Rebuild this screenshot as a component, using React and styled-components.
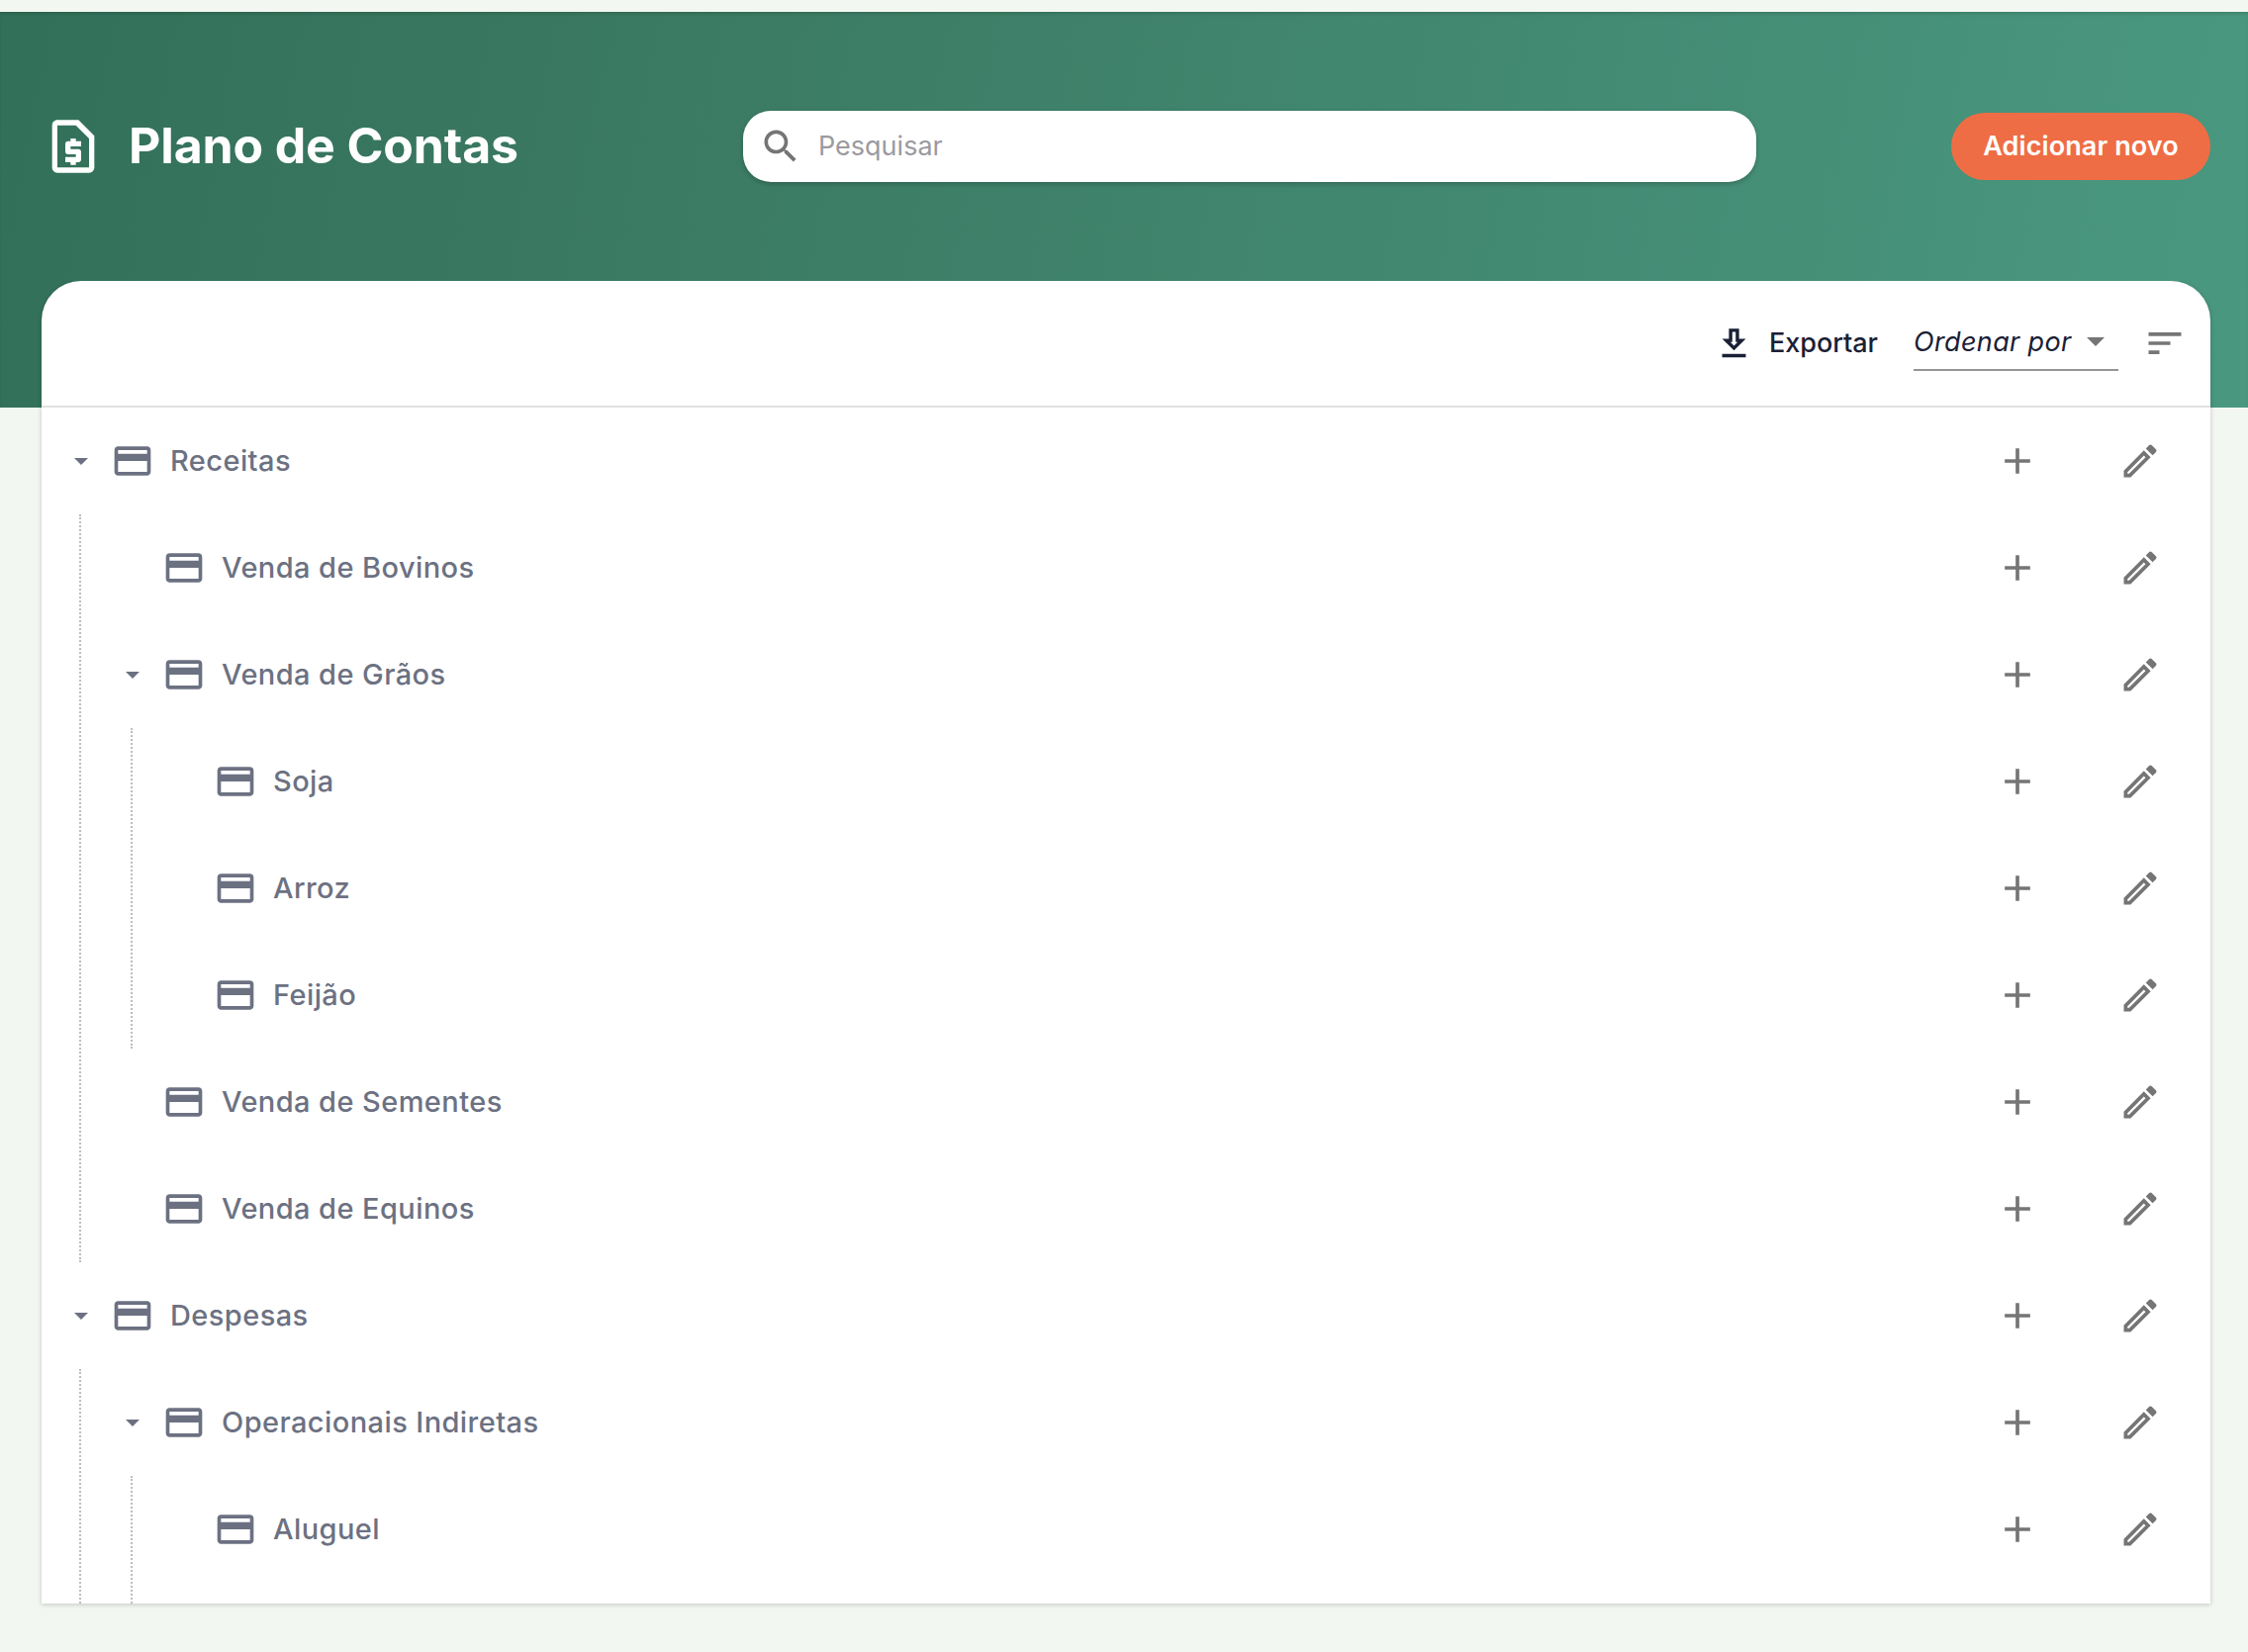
import React from "react";
import styled, { createGlobalStyle } from "styled-components";

const Global = createGlobalStyle`
  html, body { margin: 0; padding: 0; background: #f3f7f2; }
  body { font-family: "Inter", "Open Sans", sans-serif; }
  * { box-sizing: border-box; }
`;

const Page = styled.div`
  position: relative;
  width: 2272px;
  height: 1670px;
  overflow: hidden;
  padding-top: 12px;
`;

const Hero = styled.header`
  height: 400px;
  background: linear-gradient(100deg, #32705a 0%, #3a7861 25%, #4a9880 100%);
  box-shadow: inset 0 3px 4px -2px rgba(0, 0, 0, 0.2);
  display: flex;
  align-items: flex-start;
  padding: 100px 38px 0 52px;
`;

const TitleGroup = styled.div`
  display: flex;
  align-items: center;
  width: 699px;
  height: 72px;
  flex: none;
`;

const TitleIcon = styled.svg`
  width: 64px;
  height: 64px;
  margin-left: -10px;
  fill: #fff;
  flex: none;
`;

const Title = styled.h1`
  margin: -2px 0 0 24px;
  font-size: 50px;
  line-height: 72px;
  font-weight: 700;
  letter-spacing: -0.15px;
  color: #fff;
  white-space: nowrap;
`;

const Search = styled.div`
  width: 1024px;
  height: 72px;
  flex: none;
  background: #fff;
  border-radius: 28px;
  box-shadow: 0 2px 5px rgba(0, 0, 0, 0.22);
  display: flex;
  align-items: center;
  padding-left: 16px;
`;

const SearchIcon = styled.svg`
  width: 44px;
  height: 44px;
  fill: #757575;
  flex: none;
`;

const SearchText = styled.span`
  margin: -2px 0 0 16px;
  font-size: 27px;
  color: #9a9a9f;
`;

const AddButton = styled.button`
  margin: 2px 0 0 auto;
  width: 262px;
  height: 68px;
  border: 0;
  border-radius: 34px;
  background: #ef6d45;
  color: #fff;
  font-family: inherit;
  font-size: 27px;
  font-weight: 600;
  letter-spacing: 0.1px;
  white-space: nowrap;
  padding: 0 0 2px;
`;

const Card = styled.main`
  position: absolute;
  left: 42px;
  top: 284px;
  width: 2192px;
  height: 1337px;
  background: #fff;
  border-radius: 40px 40px 0 0;
  box-shadow: 0 1px 5px rgba(0, 0, 0, 0.2);
  clip-path: inset(0 -10px -10px -10px);
  overflow: hidden;
`;

const Toolbar = styled.div`
  height: 128px;
  border-bottom: 2px solid #e2e2e2;
  display: flex;
  align-items: flex-start;
  justify-content: flex-end;
  padding: 30px 24px 0 0;
`;

const ExportIcon = styled.svg`
  width: 41px;
  height: 41px;
  fill: #1a2035;
  flex: none;
  margin-top: 13px;
`;

const ExportLabel = styled.span`
  margin: 0 36px 0 15px;
  font-size: 27px;
  line-height: 66px;
  font-weight: 500;
  letter-spacing: -0.05px;
  color: #1a2035;
`;

const SortSelect = styled.div`
  width: 207px;
  height: 61px;
  padding-top: 4px;
  border-bottom: 2px solid #949494;
  display: flex;
  align-items: center;
  font-size: 27px;
  font-style: italic;
  letter-spacing: 0.35px;
  color: #1a2035;
  white-space: nowrap;
`;

const SortCaret = styled.span`
  margin-left: 15px;
  width: 0;
  height: 0;
  border-left: 9px solid transparent;
  border-right: 9px solid transparent;
  border-top: 9px solid #757575;
`;

const SortIcon = styled.svg`
  width: 44px;
  height: 44px;
  margin: 11px 0 0 25px;
  fill: #757575;
  flex: none;
`;

const Tree = styled.ul`
  list-style: none;
  margin: 0;
  padding: 0;
`;

const Item = styled.li`
  position: relative;
`;

const Row = styled.div`
  height: 108px;
  display: flex;
  align-items: center;
  padding-left: ${(p) => 28 + p.$level * 52}px;
  padding-right: 49px;
`;

const Caret = styled.span`
  width: 14px;
  height: 7px;
  flex: none;
  margin: 1px 0 0 5px;
  clip-path: polygon(0 0, 100% 0, 50% 100%);
  background: ${(p) => (p.$hidden ? "transparent" : "#6c7182")};
`;

const CardIcon = styled.svg`
  width: 44px;
  height: 44px;
  margin-left: 23px;
  fill: #6c7182;
  flex: none;
`;

const Label = styled.span`
  margin: -2px 0 0 16px;
  font-size: 29px;
  font-weight: 500;
  letter-spacing: 0.42px;
  color: #6c7182;
  white-space: nowrap;
`;

const Actions = styled.div`
  margin-left: auto;
  display: flex;
  align-items: center;
  gap: 80px;
`;

const ActionIcon = styled.svg`
  width: 44px;
  height: 44px;
  fill: #757575;
  flex: none;
`;

const Children = styled.ul`
  list-style: none;
  margin: 0;
  padding: 0 0 ${(p) => (p.$continues ? "40px" : "0")};
  position: relative;
  &::before {
    content: "";
    position: absolute;
    left: ${(p) => 38 + p.$level * 52}px;
    top: 0;
    bottom: 0;
    border-left: 2px dotted #bdbdbd;
  }
`;

const CARD =
  "M20 4H4c-1.11 0-1.99.89-1.99 2L2 18c0 1.11.89 2 2 2h16c1.11 0 2-.89 2-2V6c0-1.11-.89-2-2-2zm0 14H4v-6h16v6zm0-10H4V6h16v2z";
const PLUS = "M19 13h-6v6h-2v-6H5v-2h6V5h2v6h6v2z";
const PENCIL =
  "M14.06 9.02l.92.92L5.92 19H5v-.92l9.06-9.06M17.66 3c-.25 0-.51.1-.7.29l-1.83 1.83 3.75 3.75 1.83-1.83c.39-.39.39-1.02 0-1.41l-2.34-2.34c-.2-.2-.45-.29-.71-.29zm-3.6 3.19L3 17.25V21h3.75L17.81 9.94l-3.75-3.75z";

const tree = [
  {
    name: "Receitas",
    children: [
      { name: "Venda de Bovinos" },
      {
        name: "Venda de Grãos",
        children: [{ name: "Soja" }, { name: "Arroz" }, { name: "Feijão" }],
      },
      { name: "Venda de Sementes" },
      { name: "Venda de Equinos" },
    ],
  },
  {
    name: "Despesas",
    continues: true,
    children: [
      {
        name: "Operacionais Indiretas",
        continues: true,
        children: [{ name: "Aluguel" }],
      },
    ],
  },
];

function Node({ node, level }) {
  return (
    <Item>
      <Row $level={level}>
        <Caret $hidden={!node.children} />
        <CardIcon viewBox="0 0 24 24">
          <path d={CARD} />
        </CardIcon>
        <Label>{node.name}</Label>
        <Actions>
          <ActionIcon viewBox="0 0 24 24">
            <path d={PLUS} />
          </ActionIcon>
          <ActionIcon viewBox="0 0 24 24">
            <path d={PENCIL} />
          </ActionIcon>
        </Actions>
      </Row>
      {node.children && (
        <Children $level={level} $continues={node.continues}>
          {node.children.map((c) => (
            <Node key={c.name} node={c} level={level + 1} />
          ))}
        </Children>
      )}
    </Item>
  );
}

export default function App() {
  return (
    <Page>
      <Global />
      <Hero>
        <TitleGroup>
          <TitleIcon viewBox="0 0 24 24">
            <path d="M14 2H6c-1.1 0-2 .9-2 2v16c0 1.1.9 2 2 2h12c1.1 0 2-.9 2-2V8l-6-6zM6 20V4h7l5 5v11H6zm5-1h2v-1h1c.55 0 1-.45 1-1v-3c0-.55-.45-1-1-1h-3v-1h4v-2h-2V9h-2v1h-1c-.55 0-1 .45-1 1v3c0 .55.45 1 1 1h3v1H9v2h2v1z" />
          </TitleIcon>
          <Title>Plano de Contas</Title>
        </TitleGroup>
        <Search>
          <SearchIcon viewBox="0 0 24 24">
            <path d="M15.5 14h-.79l-.28-.27C15.41 12.59 16 11.11 16 9.5 16 5.91 13.09 3 9.5 3S3 5.91 3 9.5 5.91 16 9.5 16c1.61 0 3.09-.59 4.23-1.57l.27.28v.79l5 4.99L20.49 19l-4.99-5zm-6 0C7.01 14 5 11.99 5 9.5S7.01 5 9.5 5 14 7.01 14 9.5 11.99 14 9.5 14z" />
          </SearchIcon>
          <SearchText>Pesquisar</SearchText>
        </Search>
        <AddButton>Adicionar novo</AddButton>
      </Hero>
      <Card>
        <Toolbar>
          <ExportIcon viewBox="0 0 24 24">
            <path d="M19 9h-4V3H9v6H5l7 7 7-7zm-8 2V5h2v6h1.17L12 13.17 9.83 11H11zm-6 7h14v2H5z" />
          </ExportIcon>
          <ExportLabel>Exportar</ExportLabel>
          <SortSelect>
            Ordenar por
            <SortCaret />
          </SortSelect>
          <SortIcon viewBox="0 0 24 24">
            <path d="M3 18h6v-2H3v2zM3 6v2h18V6H3zm0 7h12v-2H3v2z" />
          </SortIcon>
        </Toolbar>
        <Tree>
          {tree.map((n) => (
            <Node key={n.name} node={n} level={0} />
          ))}
        </Tree>
      </Card>
    </Page>
  );
}
